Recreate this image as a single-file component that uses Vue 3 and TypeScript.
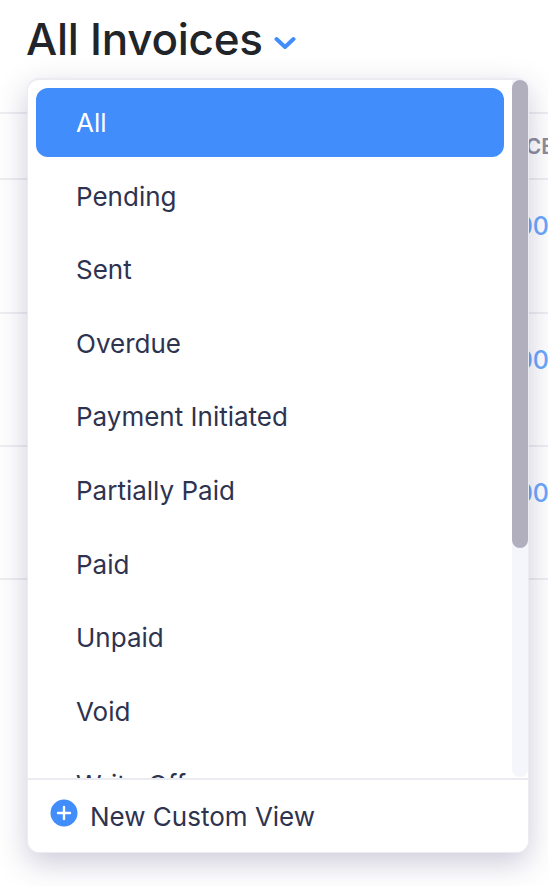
<script setup lang="ts">
const views: string[] = ['All', 'Pending', 'Sent', 'Overdue', 'Payment Initiated', 'Partially Paid', 'Paid', 'Unpaid', 'Void', 'Write Off']
const rows: { height: number; text: string; kind: string }[] = [
  { height: 66, text: 'CE', kind: 'heading' },
  { height: 134, text: '00', kind: 'amount' },
  { height: 133, text: '00', kind: 'amount' },
  { height: 133, text: '00', kind: 'amount' },
]
</script>

<template>
  <div class="page">
    <header class="head">
      <h1 class="title">All Invoices</h1>
      <svg class="chev" viewBox="0 0 22 14" width="22" height="14" aria-hidden="true">
        <path d="M2.5 3 L11 11 L19.5 3" fill="none" stroke="#408dfb" stroke-width="4" stroke-linecap="round" stroke-linejoin="round" />
      </svg>
    </header>

    <div class="table">
      <div
        v-for="(row, i) in rows"
        :key="i"
        class="row"
        :class="row.kind"
        :style="{ height: row.height + 'px' }"
      >
        <span>{{ row.text }}</span>
      </div>
    </div>

    <div class="menu">
      <div class="body">
        <ul class="list">
          <li v-for="(v, i) in views" :key="v" class="item" :class="{ active: i === 0 }">{{ v }}</li>
        </ul>
        <div class="track"><div class="thumb"></div></div>
      </div>
      <div class="foot">
        <svg class="plus" viewBox="0 0 28 28" width="28" height="28" aria-hidden="true">
          <circle cx="14" cy="14" r="13.5" fill="#408dfb" />
          <path d="M14 8 V20 M8 14 H20" stroke="#fff" stroke-width="2.4" stroke-linecap="round" />
        </svg>
        <span>New Custom View</span>
      </div>
    </div>
  </div>
</template>

<style>
html, body { margin: 0; background: #fff; }
</style>

<style scoped>
.page {
  position: relative;
  width: 548px;
  height: 886px;
  overflow: hidden;
  background: #fff;
  font-family: Inter, "Liberation Sans", sans-serif;
}
.head {
  display: flex;
  align-items: center;
  gap: 11px;
  height: 78px;
  padding-left: 26px;
}
.title {
  margin: 0;
  font-size: 44px;
  font-weight: 500;
  letter-spacing: -0.27px;
  line-height: 78px;
  color: #212529;
}
.chev { margin-top: 8px; }
.table { margin-top: 34px; border-top: 2px solid #eeeef2; }
.row {
  box-sizing: border-box;
  display: flex;
  justify-content: flex-end;
  border-bottom: 2px solid #eeeef2;
  white-space: nowrap;
}
.row.heading {
  align-items: center;
  color: #8c8c9a;
  font-size: 21px;
  font-weight: 600;
}
.row.heading span { margin-right: -6px; }
.row.amount {
  align-items: flex-start;
  padding-top: 31px;
  color: #6aa6fb;
  font-size: 25px;
  font-weight: 500;
}
.row.amount span { margin-right: -1px; }
.menu {
  position: absolute;
  left: 27px;
  top: 78px;
  width: 502px;
  height: 775px;
  box-sizing: border-box;
  display: flex;
  flex-direction: column;
  background: #fff;
  border: 1px solid #ebebf2;
  border-top-width: 2px;
  border-radius: 12px;
  box-shadow: 0 10px 30px rgba(60, 55, 110, 0.26);
}
.body {
  flex: 1;
  min-height: 0;
  display: flex;
  overflow: hidden;
}
.list {
  flex: 1;
  margin: 0;
  padding: 8px 8px 0;
  list-style: none;
  overflow: hidden;
}
.item {
  box-sizing: border-box;
  height: 69px;
  margin-bottom: 4.6px;
  padding-left: 40px;
  border-radius: 12px;
  font-size: 26px;
  line-height: 69px;
  color: #2e3350;
}
.item.active { background: #408dfb; color: #fff; }
.track {
  flex: none;
  width: 16px;
  margin-bottom: 1px;
  background: #f5f6fc;
  border-radius: 0 0 8px 8px;
}
.thumb {
  height: 468px;
  background: #b1aebe;
  border-radius: 8px;
}
.foot {
  flex: none;
  height: 74px;
  box-sizing: border-box;
  display: flex;
  align-items: center;
  gap: 12px;
  padding-left: 22px;
  border-top: 2px solid #ebebf2;
  font-size: 26px;
  color: #2e3350;
}
.plus { margin-bottom: 6px; }
</style>
